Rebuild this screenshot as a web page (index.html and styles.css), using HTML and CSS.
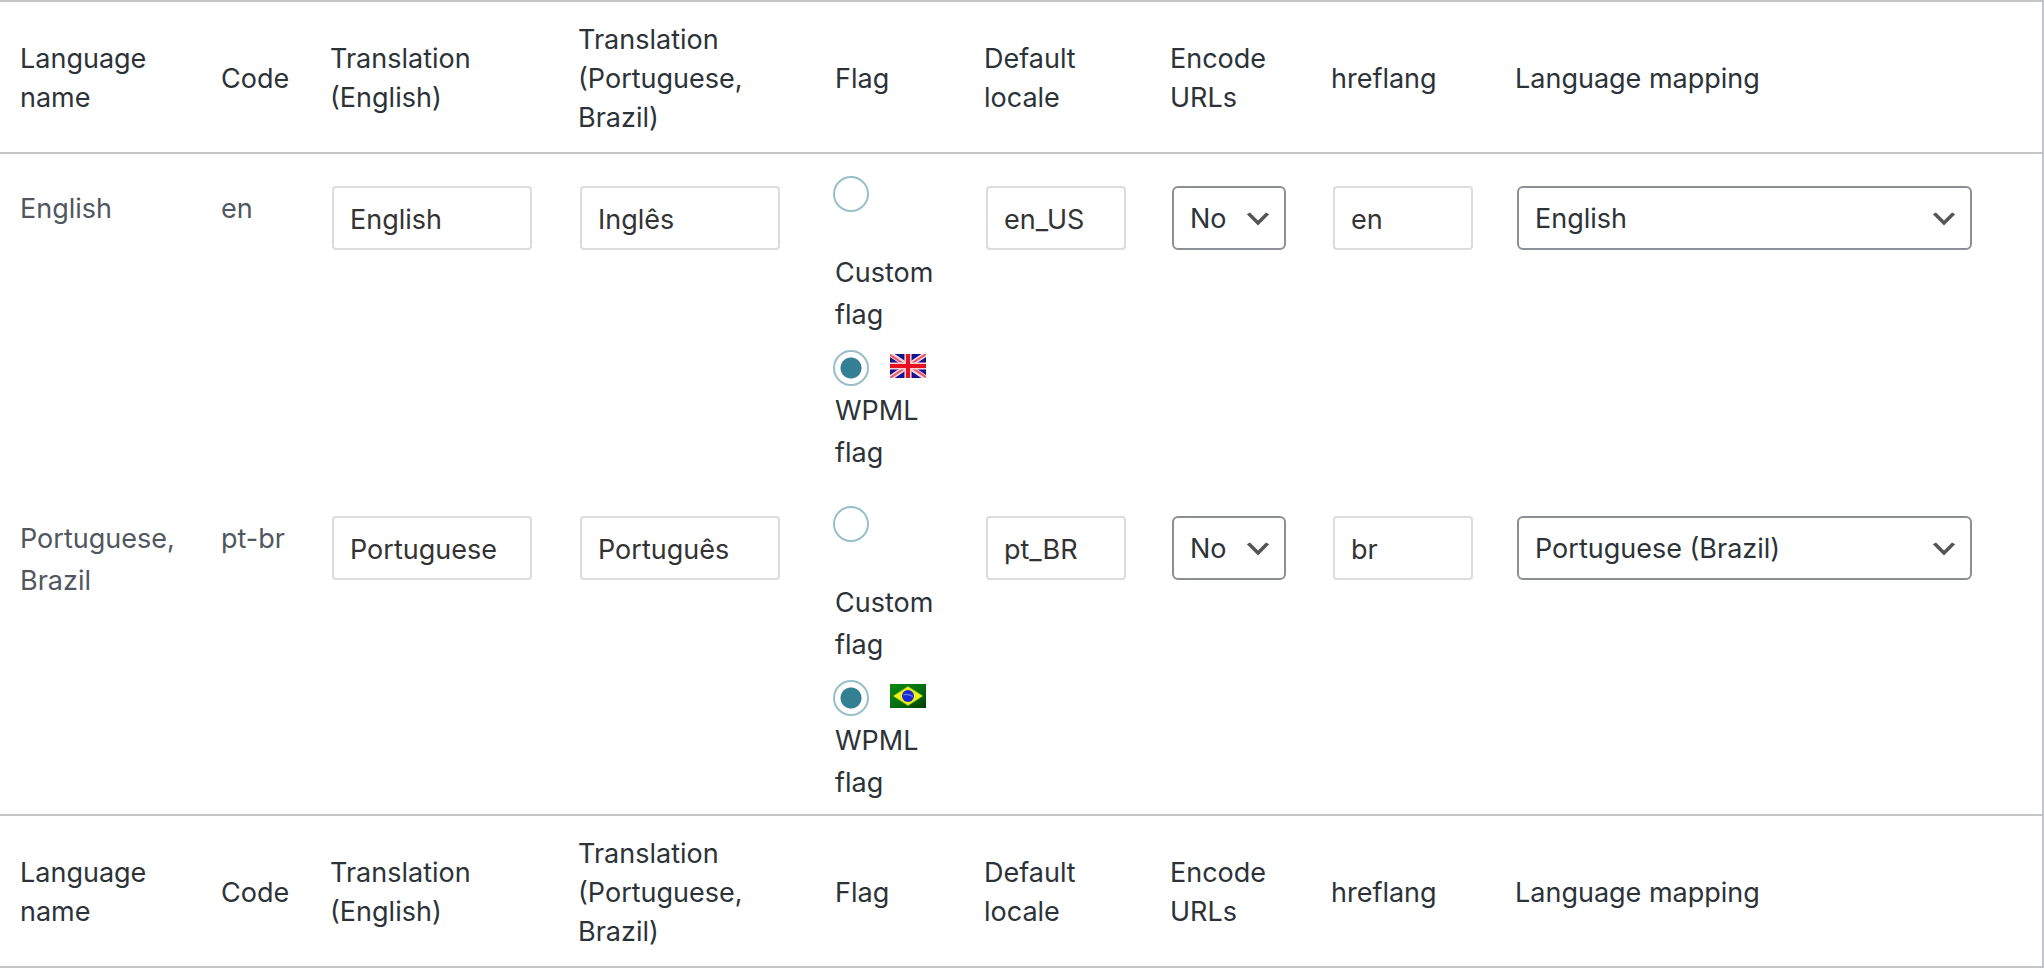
FILE: index.html
```html
<!DOCTYPE html>
<html lang="en">
<head>
    <meta charset="utf-8">
    <title>Edit languages</title>
    <link rel="stylesheet" href="styles.css">
</head>
<body>
<svg class="defs" aria-hidden="true">
    <defs>
        <linearGradient id="green" x2="1" y2="1">
            <stop stop-color="#0c8a14" offset="0"/>
            <stop stop-color="#067010" offset="0.5"/>
            <stop stop-color="#003c04" offset="1"/>
        </linearGradient>
        <symbol id="flag-gb" viewBox="0 0 18 12">
            <rect width="18" height="12" fill="#14148c"/>
            <path d="M0 0L18 12M18 0L0 12" stroke="#f4d8e0" stroke-width="2.6"/>
            <path d="M0 0.4L9 6.4M18 11.6L9 5.6M18 0L9 6M0 12L9 6" stroke="#ee5566" stroke-width="1"/>
            <path d="M9 0V12M0 6H18" stroke="#f8d0d4" stroke-width="3.6"/>
            <path d="M9 0V12M0 6H18" stroke="#e81020" stroke-width="2"/>
        </symbol>
        <symbol id="flag-br" viewBox="0 0 18 12">
            <rect width="18" height="12" fill="url(#green)"/>
            <path d="M1.6 6L9 1.2L16.4 6L9 10.8Z" fill="#eef01c" stroke="#8cb818" stroke-width="0.4"/>
            <circle cx="9" cy="6" r="3" fill="#1c28d8"/>
            <path d="M6.8 5.4Q9 4.8 11.4 6.2" fill="none" stroke="#6c80e4" stroke-width="0.6"/>
        </symbol>
    </defs>
</svg>
<form method="post">
    <table class="languages">
        <colgroup>
            <col class="col-name">
            <col class="col-code">
            <col class="col-english">
            <col class="col-portuguese">
            <col class="col-flag">
            <col class="col-locale">
            <col class="col-encode">
            <col class="col-hreflang">
            <col class="col-mapping">
        </colgroup>
        <thead>
            <tr>
                <th scope="col">Language name</th>
                <th scope="col">Code</th>
                <th scope="col">Translation (English)</th>
                <th scope="col">Translation (Portuguese, Brazil)</th>
                <th scope="col">Flag</th>
                <th scope="col">Default locale</th>
                <th scope="col">Encode URLs</th>
                <th scope="col">hreflang</th>
                <th scope="col">Language mapping</th>
            </tr>
        </thead>
        <tbody>
            <tr>
                <td class="text">English</td>
                <td class="text">en</td>
                <td><input class="field" type="text" name="en_translation_en" value="English" aria-label="Translation (English)"></td>
                <td><input class="field" type="text" name="en_translation_pt" value="Inglês" aria-label="Translation (Portuguese, Brazil)"></td>
                <td class="flags">
                    <label class="choice">
                        <span class="pick"><input class="radio" type="radio" name="en_flag" value="custom"></span>
                        <span class="upload"></span>
                        Custom flag
                    </label>
                    <label class="choice">
                        <span class="pick">
                            <input class="radio" type="radio" name="en_flag" value="wpml" checked>
                            <svg class="flag" aria-hidden="true"><use href="#flag-gb"/></svg>
                        </span>
                        WPML flag
                    </label>
                </td>
                <td><input class="field short" type="text" name="en_locale" value="en_US" aria-label="Default locale"></td>
                <td>
                    <select class="select encode" name="en_encode" aria-label="Encode URLs">
                        <option selected>No</option>
                        <option>Yes</option>
                    </select>
                </td>
                <td><input class="field short" type="text" name="en_hreflang" value="en" aria-label="hreflang"></td>
                <td>
                    <select class="select mapping" name="en_mapping" aria-label="Language mapping">
                        <option selected>English</option>
                        <option>Portuguese (Brazil)</option>
                    </select>
                </td>
            </tr>
            <tr>
                <td class="text">Portuguese, Brazil</td>
                <td class="text">pt-br</td>
                <td><input class="field" type="text" name="pt_translation_en" value="Portuguese" aria-label="Translation (English)"></td>
                <td><input class="field" type="text" name="pt_translation_pt" value="Português" aria-label="Translation (Portuguese, Brazil)"></td>
                <td class="flags">
                    <label class="choice">
                        <span class="pick"><input class="radio" type="radio" name="pt_flag" value="custom"></span>
                        <span class="upload"></span>
                        Custom flag
                    </label>
                    <label class="choice">
                        <span class="pick">
                            <input class="radio" type="radio" name="pt_flag" value="wpml" checked>
                            <svg class="flag" aria-hidden="true"><use href="#flag-br"/></svg>
                        </span>
                        WPML flag
                    </label>
                </td>
                <td><input class="field short" type="text" name="pt_locale" value="pt_BR" aria-label="Default locale"></td>
                <td>
                    <select class="select encode" name="pt_encode" aria-label="Encode URLs">
                        <option selected>No</option>
                        <option>Yes</option>
                    </select>
                </td>
                <td><input class="field short" type="text" name="pt_hreflang" value="br" aria-label="hreflang"></td>
                <td>
                    <select class="select mapping" name="pt_mapping" aria-label="Language mapping">
                        <option>English</option>
                        <option selected>Portuguese (Brazil)</option>
                    </select>
                </td>
            </tr>
        </tbody>
        <tfoot>
            <tr>
                <th scope="col">Language name</th>
                <th scope="col">Code</th>
                <th scope="col">Translation (English)</th>
                <th scope="col">Translation (Portuguese, Brazil)</th>
                <th scope="col">Flag</th>
                <th scope="col">Default locale</th>
                <th scope="col">Encode URLs</th>
                <th scope="col">hreflang</th>
                <th scope="col">Language mapping</th>
            </tr>
        </tfoot>
    </table>
</form>
</body>
</html>
```
FILE: styles.css
```css
* {
    box-sizing: border-box;
}
body {
    margin: 0;
    background: #fff;
    color: #2c3338;
    font: 27px/42px Inter, "Liberation Sans", sans-serif;
}
.defs {
    display: block;
    width: 0;
    height: 0;
}

/* Table */
.languages {
    width: 100%;
    table-layout: fixed;
    border: solid #c3c4c7;
    border-width: 2px 2px 2px 0;
    border-spacing: 0;
}
.col-name { width: 201px; }
.col-code { width: 109px; }
.col-english { width: 248px; }
.col-portuguese { width: 257px; }
.col-flag { width: 149px; }
.col-locale { width: 186px; }
.col-encode { width: 161px; }
.col-hreflang { width: 184px; }
.col-mapping { width: 547px; }

.languages th {
    height: 152px;
    padding: 17px 20px 15px;
    font-weight: 400;
    line-height: 39px;
    text-align: left;
    vertical-align: middle;
}
.languages thead th {
    border-bottom: 2px solid #c3c4c7;
}
.languages tfoot th {
    border-top: 2px solid #c3c4c7;
}
.languages td {
    padding: 32px 20px 0;
    vertical-align: top;
}
.languages td.text {
    padding-top: 34px;
    color: #50575e;
}
.languages td.flags {
    padding: 22px 20px 10px;
}

/* Text boxes and drop-downs */
.field, .select {
    display: block;
    height: 64px;
    margin: 0 2px;
    padding: 2px 16px 0;
    background: #fff;
    font: inherit;
}
.field {
    width: 200px;
    border: 2px solid #dcdcde;
    border-radius: 4px;
    color: #333;
}
.field.short {
    width: 140px;
}
.select {
    appearance: none;
    border: 2px solid #8c8f94;
    border-radius: 6px;
    color: #2c3338;
    background: #fff url('data:image/svg+xml,<svg xmlns="http://www.w3.org/2000/svg" viewBox="0 0 20 20"><path d="M5 6l5 5 5-5 2 1-7 7-7-7 2-1z" fill="%23555"/></svg>') no-repeat right 10px top 55%;
    background-size: 32px 32px;
}
.encode {
    width: 114px;
}
.mapping {
    width: calc(100% - 52px);
}

/* Flag picker */
.choice {
    display: block;
}
.choice + .choice {
    margin-top: 14px;
}
.pick {
    display: flex;
    align-items: flex-start;
    gap: 21px;
    height: 40px;
}
.upload {
    display: block;
    height: 36px;
}
.radio {
    appearance: none;
    flex: none;
    width: 36px;
    height: 36px;
    margin: 0 0 0 -2px;
    border: 2px solid #99bfca;
    border-radius: 50%;
    background: #fff;
}
.radio:checked {
    background: radial-gradient(circle, #337f93 10px, #fff 11px);
}
.flag {
    flex: none;
    width: 36px;
    height: 24px;
    margin-top: 4px;
}
```
